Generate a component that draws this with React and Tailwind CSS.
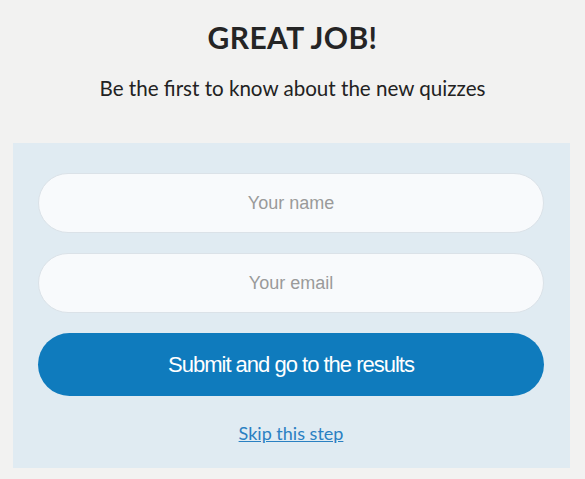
export default function App() {
  return (
    <div className="min-h-[479px] w-[585px] bg-[#f2f2f1] pt-[18px]" style={{ fontFamily: 'Lato, "Liberation Sans", sans-serif' }}>
      <h1 className="text-center text-[30px] font-bold leading-[38px] tracking-[0.4px] text-[#252525]">GREAT JOB!</h1>
      <p className="mt-[18px] text-center text-[20.6px] leading-[28px] text-[#222]">Be the first to know about the new quizzes</p>
      <div className="ml-[13px] mt-[41px] w-[557px] bg-[#e0ebf2] pl-[25px] pr-[26px] pt-[30px] pb-[22px]">
        <form className="flex flex-col gap-[20px]" onSubmit={(e) => e.preventDefault()}>
          <input
            type="text"
            placeholder="Your name"
            className="h-[60px] w-full rounded-full border border-[#dbe2e8] bg-[#f8fafc] text-center text-[18px] text-[#333] placeholder:text-[#9a9a9a] focus:outline-none"
            style={{ fontFamily: '"Liberation Sans", Arial, sans-serif' }}
          />
          <input
            type="email"
            placeholder="Your email"
            className="h-[60px] w-full rounded-full border border-[#dbe2e8] bg-[#f8fafc] text-center text-[18px] text-[#333] placeholder:text-[#9a9a9a] focus:outline-none"
            style={{ fontFamily: '"Liberation Sans", Arial, sans-serif' }}
          />
          <button
            type="submit"
            className="h-[63px] w-full rounded-full bg-[#0f7bbd] text-[22px] tracking-[-1px] text-white"
            style={{ fontFamily: '"Liberation Sans", Arial, sans-serif' }}
          >
            Submit and go to the results
          </button>
        </form>
        <div className="mt-[24px] text-center">
          <a href="#" className="text-[18px] leading-[26px] text-[#2a80c2] underline">Skip this step</a>
        </div>
      </div>
    </div>
  );
}
